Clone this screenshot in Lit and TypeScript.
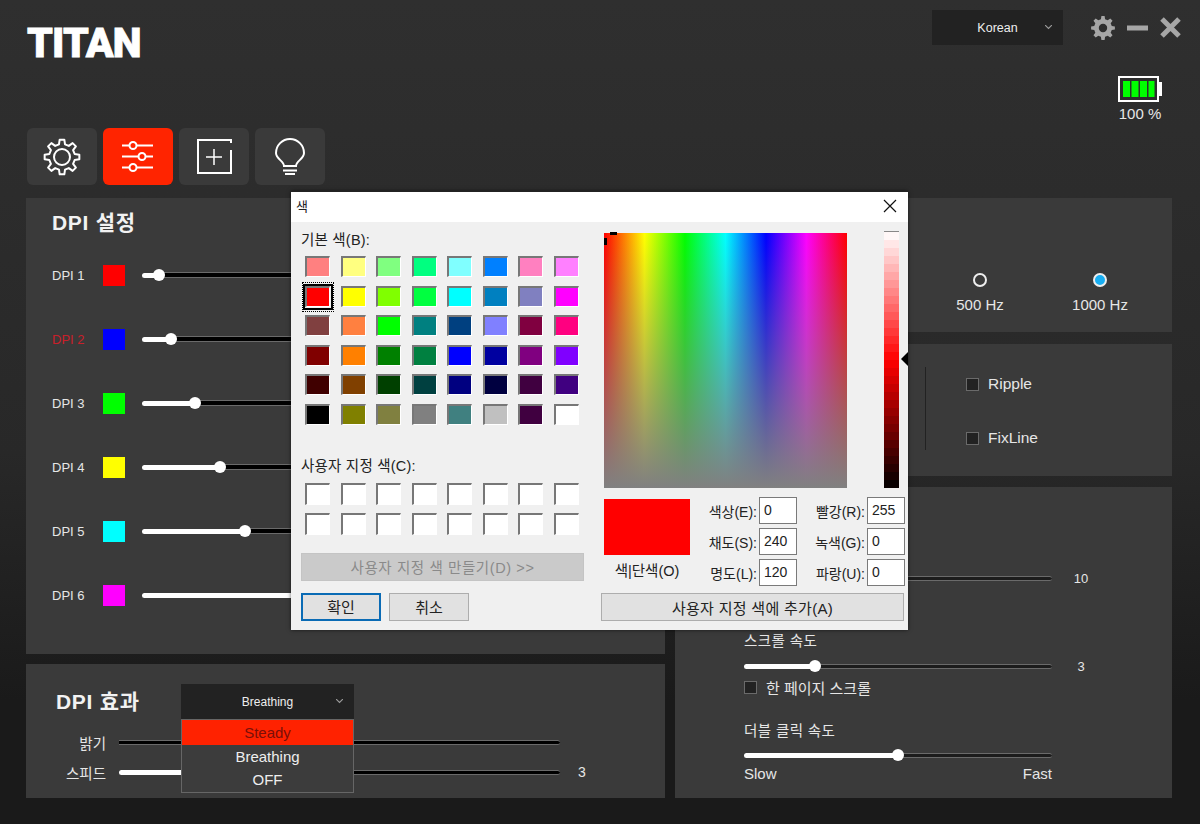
import { LitElement, css, html, svg } from 'lit';
import { customElement, property } from 'lit/decorators.js';
import { styleMap } from 'lit/directives/style-map.js';
import { classMap } from 'lit/directives/class-map.js';

const SANS = css`'Liberation Sans', 'Noto Sans CJK KR', sans-serif`;

const BASIC_COLORS = [
  '#ff8080', '#ffff80', '#80ff80', '#00ff80', '#80ffff', '#0080ff', '#ff80c0', '#ff80ff',
  '#ff0000', '#ffff00', '#80ff00', '#00ff40', '#00ffff', '#0080c0', '#8080c0', '#ff00ff',
  '#804040', '#ff8040', '#00ff00', '#008080', '#004080', '#8080ff', '#800040', '#ff0080',
  '#800000', '#ff8000', '#008000', '#008040', '#0000ff', '#0000a0', '#800080', '#8000ff',
  '#400000', '#804000', '#004000', '#004040', '#000080', '#000040', '#400040', '#400080',
  '#000000', '#808000', '#808040', '#808080', '#408080', '#c0c0c0', '#400040', '#ffffff',
];

const DPI_ROWS = [
  { label: 'DPI 1', color: '#ff0000', value: 3.4 },
  { label: 'DPI 2', color: '#0000ff', value: 5.8, active: true },
  { label: 'DPI 3', color: '#00ff00', value: 10.7 },
  { label: 'DPI 4', color: '#ffff00', value: 15.7 },
  { label: 'DPI 5', color: '#00ffff', value: 20.7 },
  { label: 'DPI 6', color: '#ff00ff', value: 45 },
];

// outline of a cog with square-ish teeth, centred on 0,0
function gearPath(outer: number, inner: number, teeth: number): string {
  const pts: string[] = [];
  const step = (Math.PI * 2) / teeth;
  for (let i = 0; i < teeth; i++) {
    const a = i * step;
    const corners: [number, number][] = [
      [inner, a - step * 0.3],
      [outer, a - step * 0.17],
      [outer, a + step * 0.17],
      [inner, a + step * 0.3],
    ];
    for (const [r, t] of corners) {
      pts.push(`${(r * Math.cos(t)).toFixed(2)} ${(r * Math.sin(t)).toFixed(2)}`);
    }
  }
  return `M${pts.join('L')}Z`;
}

const chevron = svg`<polyline points="0,0 3.5,3.5 7,0" fill="none" stroke="#9a9a9a" stroke-width="1.2"/>`;

@customElement('titan-slider')
export class TitanSlider extends LitElement {
  static styles = css`
    :host {
      display: flex;
      align-items: center;
      height: 12px;
    }
    .fill {
      height: 5px;
      background: #fff;
      border-radius: 3px 0 0 3px;
    }
    .thumb {
      flex: none;
      width: 12px;
      height: 12px;
      margin: 0 -6px;
      border-radius: 50%;
      background: #fff;
      position: relative;
    }
    .rest {
      flex: 1;
      height: var(--rest-h, 3px);
      background: var(--rest-bg, #000);
      border-top: 1px solid #6a6a6a;
      border-bottom: 1px solid #6a6a6a;
      border-radius: 0 3px 3px 0;
    }
  `;

  @property({ type: Number }) value = 0;
  @property({ type: Boolean }) bare = false;

  render() {
    return html`
      <div class="fill" style=${styleMap({ width: `${this.value}%` })}></div>
      ${this.bare ? null : html`<div class="thumb"></div>`}
      <div class="rest"></div>
    `;
  }
}

@customElement('color-dialog')
export class ColorDialog extends LitElement {
  static styles = css`
    :host {
      display: block;
      width: 617px;
      box-sizing: border-box;
      border-top: 1px solid #222;
      background: #f0f0f0;
      color: #222;
      font: 14px ${SANS};
      box-shadow: 0 0 4px rgba(0, 0, 0, 0.6);
    }
    .title {
      height: 30px;
      background: #fff;
      display: flex;
      align-items: center;
      justify-content: space-between;
      padding: 0 11px 3px 5px;
      box-sizing: border-box;
      font-size: 13px;
    }
    .body {
      display: flex;
      gap: 17px;
      padding: 0 4px 9px 10px;
    }
    .left {
      width: 283px;
      padding-top: 10px;
    }
    .cap {
      height: 16px;
      line-height: 16px;
      font-size: 14.5px;
      letter-spacing: 0.2px;
      white-space: nowrap;
    }
    .grid {
      display: grid;
      grid-template-columns: repeat(8, 25px);
      column-gap: 10.5px;
      padding-left: 4px;
    }
    .basic {
      margin-top: 8px;
      row-gap: 8.6px;
      grid-auto-rows: 21px;
    }
    .custom {
      margin-top: 9px;
      row-gap: 8px;
      grid-auto-rows: 22px;
    }
    .swatch {
      position: relative;
      box-sizing: border-box;
      border-top: 2px solid #777;
      border-left: 2px solid #777;
      border-right: 1px solid #fff;
      border-bottom: 1px solid #fff;
    }
    .swatch.blank {
      background: #fff;
    }
    .swatch.picked::before {
      content: '';
      position: absolute;
      inset: -4px;
      border: 2px solid #000;
    }
    .swatch.picked::after {
      content: '';
      position: absolute;
      inset: -6px -5px;
      border: 1px dotted #000;
    }
    .btn {
      box-sizing: border-box;
      height: 28px;
      display: flex;
      align-items: center;
      justify-content: center;
      background: #e1e1e1;
      border: 1px solid #adadad;
      font-size: 15px;
    }
    .make {
      margin-top: 18px;
      background: #cacaca;
      border-color: #c4c4c4;
      color: #8a8a8a;
      font-size: 14.5px;
      letter-spacing: 0.6px;
    }
    .actions {
      display: flex;
      gap: 8px;
      margin-top: 12px;
    }
    .actions .btn {
      width: 80px;
    }
    .ok {
      border: 2px solid #0a6bb5;
    }
    .right {
      width: 303px;
      flex: none;
    }
    .pick {
      display: flex;
      align-items: flex-start;
      padding-left: 3px;
    }
    .spectrum {
      position: relative;
      width: 243px;
      height: 255px;
      margin-top: 11px;
      background:
        linear-gradient(to bottom, rgba(128, 128, 128, 0), #808080),
        linear-gradient(to right, #f00, #ff0, #0f0, #0ff, #00f, #f0f, #f00);
    }
    .mark {
      position: absolute;
      background: #000;
    }
    .mark.h {
      left: 6px;
      top: -1px;
      width: 7px;
      height: 3px;
    }
    .mark.v {
      left: 0;
      top: 5px;
      width: 3px;
      height: 7px;
    }
    .lum {
      position: relative;
      width: 15px;
      height: 257px;
      margin: 9px 0 0 37px;
      display: flex;
      flex-direction: column;
      border-top: 1px solid #888;
      box-sizing: border-box;
    }
    .band {
      flex: 1;
    }
    .arrow {
      position: absolute;
      left: 17px;
      top: 120px;
      width: 0;
      height: 0;
      border: 7px solid transparent;
      border-left: 0;
      border-right-color: #000;
    }
    .lower {
      display: flex;
      margin-top: 9px;
    }
    .preview {
      flex: none;
      width: 86px;
      margin: 2px 0 0 3px;
      text-align: center;
      font-size: 14.5px;
      white-space: nowrap;
    }
    .solid {
      height: 56px;
      background: #f00;
      margin-bottom: 4px;
    }
    .fields {
      flex: none;
      display: grid;
      grid-template-columns: 67px 38px 66px 38px;
      column-gap: 2px;
      grid-auto-rows: 27px;
      row-gap: 4px;
    }
    .fields span {
      align-self: center;
      text-align: right;
      white-space: nowrap;
    }
    .field {
      box-sizing: border-box;
      background: #fff;
      border: 1px solid #7a7a7a;
      padding-left: 4px;
      line-height: 25px;
    }
    .add {
      margin-top: 7px;
      letter-spacing: 0.3px;
    }
  `;

  render() {
    const bands = Array.from({ length: 32 }, (_, i) => {
      const t = (i + 0.5) / 32;
      // white to red in the upper half, red to black below
      const c =
        t < 0.5
          ? `rgb(255, ${Math.round(255 * (1 - t * 2))}, ${Math.round(255 * (1 - t * 2))})`
          : `rgb(${Math.round(255 * (2 - t * 2))}, 0, 0)`;
      return html`<div class="band" style=${styleMap({ background: c })}></div>`;
    });
    return html`
      <div class="title">
        <span>색</span>
        <svg width="14" height="14" viewBox="0 0 14 14">
          <path d="M1 1L13 13M13 1L1 13" stroke="#111" stroke-width="1.2" />
        </svg>
      </div>
      <div class="body">
        <div class="left">
          <div class="cap">기본 색(B):</div>
          <div class="grid basic">
            ${BASIC_COLORS.map(
              (c, i) => html`<div
                class=${classMap({ swatch: true, picked: i === 8 })}
                style=${styleMap({ background: c })}
              ></div>`,
            )}
          </div>
          <div class="cap" style="margin-top:33px">사용자 지정 색(C):</div>
          <div class="grid custom">
            ${Array.from({ length: 16 }, () => html`<div class="swatch blank"></div>`)}
          </div>
          <div class="btn make">사용자 지정 색 만들기(D) &gt;&gt;</div>
          <div class="actions">
            <div class="btn ok">확인</div>
            <div class="btn">취소</div>
          </div>
        </div>
        <div class="right">
          <div class="pick">
            <div class="spectrum">
              <div class="mark h"></div>
              <div class="mark v"></div>
            </div>
            <div class="lum">
              ${bands}
              <div class="arrow"></div>
            </div>
          </div>
          <div class="lower">
            <div class="preview">
              <div class="solid"></div>
              색|단색(O)
            </div>
            <div class="fields">
              <span>색상(E):</span>
              <div class="field">0</div>
              <span>빨강(R):</span>
              <div class="field">255</div>
              <span>채도(S):</span>
              <div class="field">240</div>
              <span>녹색(G):</span>
              <div class="field">0</div>
              <span>명도(L):</span>
              <div class="field">120</div>
              <span>파랑(U):</span>
              <div class="field">0</div>
            </div>
          </div>
          <div class="btn add">사용자 지정 색에 추가(A)</div>
        </div>
      </div>
    `;
  }
}

@customElement('app-root')
export class AppRoot extends LitElement {
  static styles = css`
    :host {
      display: block;
      position: relative;
      width: 1200px;
      height: 824px;
      overflow: hidden;
      background: linear-gradient(#2f2f2f, #282828 55%, #1a1a1a 85%);
      color: #e6e6e6;
      font: 14px ${SANS};
    }
    header {
      height: 128px;
      display: flex;
      justify-content: space-between;
      padding: 0 19px 0 27px;
    }
    .logo {
      margin-top: 23px;
      height: 40px;
      font: 900 41px/40px Roboto, ${SANS};
      letter-spacing: -0.8px;
      -webkit-text-stroke: 0.8px #fff;
      color: #fff;
    }
    .top {
      display: flex;
      flex-direction: column;
      align-items: flex-end;
    }
    .controls {
      display: flex;
      align-items: center;
      margin-top: 10px;
    }
    .select {
      position: relative;
      box-sizing: border-box;
      display: flex;
      align-items: center;
      justify-content: center;
      background: #222;
      font-size: 12.5px;
      color: #eee;
    }
    .select svg {
      position: absolute;
      right: 11px;
      top: 15px;
    }
    .lang {
      width: 131px;
      height: 35px;
      margin-right: 28px;
    }
    .win {
      display: flex;
      align-items: center;
      gap: 12px;
    }
    .battery {
      margin: 31px 10px 0 0;
      width: 62px;
      text-align: center;
      font-size: 15px;
      line-height: 18px;
    }
    .battery svg {
      display: block;
      margin: 0 auto 3px;
    }
    .tabs {
      display: flex;
      gap: 6px;
      padding-left: 27px;
      height: 57px;
      margin-bottom: 13px;
    }
    .tab {
      width: 70px;
      display: flex;
      align-items: center;
      justify-content: center;
      background: #3a3a3a;
      border-radius: 6px;
    }
    .tab.on {
      background: #ff2400;
    }
    .columns {
      display: grid;
      grid-template-columns: 639px 497px;
      gap: 10px;
      padding-left: 26px;
    }
    .col {
      display: flex;
      flex-direction: column;
    }
    .panel {
      position: relative;
      background: #3a3a3a;
      box-sizing: border-box;
    }
    h2 {
      margin: 0;
      font: bold 21px/26px ${SANS};
      letter-spacing: 0.7px;
      color: #f2f2f2;
    }
    .dpi {
      height: 456px;
      margin-bottom: 10px;
      padding: 12px 0 0 26px;
    }
    .dpi-rows {
      margin-top: 3px;
      padding-top: 4px;
    }
    .dpi-row {
      display: flex;
      align-items: center;
      height: 64px;
      font-size: 13px;
    }
    .dpi-row .name {
      width: 51px;
    }
    .dpi-row.active .name {
      color: #c8202a;
    }
    .dpi-row .chip {
      width: 22px;
      height: 21px;
      margin-right: 17px;
    }
    .dpi-row titan-slider {
      width: 498px;
      --rest-h: 4px;
    }
    .effect {
      height: 134px;
      padding-top: 20px;
    }
    .effect-head {
      display: flex;
      align-items: center;
      padding-left: 30px;
    }
    .effect-head h2 {
      width: 125px;
    }
    .drop {
      width: 173px;
      height: 35px;
      font-size: 12px;
    }
    .menu {
      position: absolute;
      left: 0;
      top: 35px;
      width: 173px;
      height: 74px;
      box-sizing: border-box;
      background: #3c3c3c;
      border: 1px solid #666;
      font-size: 15px;
      text-align: center;
      line-height: 23px;
      z-index: 1;
    }
    .menu .sel {
      background: #ff2200;
      color: #7a0f08;
      height: 25px;
      line-height: 25px;
    }
    .effect-rows {
      display: grid;
      grid-template-columns: 80px 441px auto;
      column-gap: 13px;
      row-gap: 14px;
      grid-auto-rows: 16px;
      margin-top: 15px;
      align-items: center;
      font-size: 14.5px;
    }
    .effect-rows .lbl {
      text-align: right;
    }
    .effect-rows .val {
      margin-left: 5px;
      font-size: 14px;
    }
    .rate {
      height: 134px;
      margin-bottom: 12px;
      padding: 75px 0 0 245px;
      display: grid;
      grid-template-columns: 120px 120px;
      justify-items: center;
      align-content: start;
    }
    .radio {
      display: flex;
      flex-direction: column;
      align-items: center;
      gap: 9px;
      font-size: 15px;
      line-height: 18px;
    }
    .dot {
      box-sizing: border-box;
      width: 14px;
      height: 14px;
      border: 2px solid #eee;
      border-radius: 50%;
    }
    .dot.on {
      background: #18aef2;
    }
    .line {
      height: 132px;
      margin-bottom: 11px;
      display: flex;
      padding-left: 250px;
    }
    .sep {
      width: 1px;
      height: 83px;
      margin: 23px 40px 0 0;
      background: #222;
    }
    .checks {
      display: flex;
      flex-direction: column;
      gap: 34px;
      padding-top: 30px;
    }
    .check {
      display: flex;
      align-items: center;
      gap: 9px;
      height: 20px;
      font-size: 15.5px;
    }
    .box {
      box-sizing: border-box;
      width: 13px;
      height: 13px;
      background: #222;
      border: 1px solid #6a6a6a;
    }
    .mouse {
      height: 311px;
      padding: 85px 0 0 69px;
      --rest-bg: #1c1c1c;
    }
    .mouse titan-slider {
      width: 308px;
    }
    .slide-row {
      display: flex;
      align-items: center;
      height: 12px;
      font-size: 13px;
    }
    .slide-row span {
      width: 58px;
      text-align: center;
    }
    .cap {
      height: 20px;
      line-height: 20px;
      letter-spacing: 0.4px;
      font-size: 14.5px;
    }
    .page {
      margin-top: 5px;
      font-size: 15px;
    }
    .ends {
      width: 308px;
      display: flex;
      justify-content: space-between;
      height: 18px;
      line-height: 18px;
      margin-top: 4px;
      font-size: 15px;
    }
    color-dialog {
      position: absolute;
      left: 291px;
      top: 191px;
    }
  `;

  private renderTabs() {
    return html`
      <div class="tabs">
        <div class="tab">
          <svg width="40" height="40" viewBox="-20 -20 40 40" fill="none" stroke="#fff" stroke-width="2">
            <path d=${gearPath(17.5, 13, 8)} stroke-linejoin="round" />
            <circle r="8" />
          </svg>
        </div>
        <div class="tab on">
          <svg width="36" height="36" viewBox="0 0 36 36" fill="none" stroke="#fff" stroke-width="2">
            <path d="M2 6.5H33M2 17.5H33M2 28.5H33" />
            <circle cx="13" cy="6.5" r="3.5" fill="#ff2400" />
            <circle cx="22" cy="17.5" r="3.5" fill="#ff2400" />
            <circle cx="13" cy="28.5" r="3.5" fill="#ff2400" />
          </svg>
        </div>
        <div class="tab">
          <svg width="38" height="38" viewBox="0 0 38 38" fill="none" stroke="#fff" stroke-width="2">
            <path d="M36 5V2H3V35H36V12" />
            <path d="M11 19H27M19 11V27" stroke-width="1.5" />
          </svg>
        </div>
        <div class="tab">
          <svg width="32" height="40" viewBox="0 -2 32 40" fill="none" stroke="#fff" stroke-width="2">
            <path d="M10 27C10 22 2 20 2 14A14 14 0 1 1 30 14C30 20 22 22 22 27Z" />
            <path d="M9 31.5H23M11 35H21" />
          </svg>
        </div>
      </div>
    `;
  }

  private renderHeader() {
    return html`
      <header>
        <div class="logo">TITAN</div>
        <div class="top">
          <div class="controls">
            <div class="select lang">
              Korean
              <svg width="7" height="5" viewBox="0 0 7 5">${chevron}</svg>
            </div>
            <div class="win">
              <svg width="24" height="24" viewBox="-12 -12 24 24">
                <path
                  fill="#a6a6a6"
                  fill-rule="evenodd"
                  d="${gearPath(12, 9, 8)}M4.2 0A4.2 4.2 0 1 0 -4.2 0A4.2 4.2 0 1 0 4.2 0Z"
                />
              </svg>
              <svg width="21" height="6" viewBox="0 0 21 6"><rect width="21" height="5" y="0.5" fill="#a6a6a6" /></svg>
              <svg width="21" height="21" viewBox="0 0 21 21">
                <path d="M2 2L19 19M19 2L2 19" stroke="#a6a6a6" stroke-width="5" />
              </svg>
            </div>
          </div>
          <div class="battery">
            <svg width="44" height="26" viewBox="0 0 44 26">
              <rect x="1" y="1" width="39" height="24" fill="none" stroke="#fff" stroke-width="2" />
              <rect x="41" y="6" width="3" height="14" fill="#fff" />
              <rect x="5" y="5" width="7" height="16" fill="#0f0" />
              <rect x="13.5" y="5" width="7" height="16" fill="#0f0" />
              <rect x="22" y="5" width="7" height="16" fill="#0f0" />
              <rect x="30.5" y="5" width="6" height="16" fill="#0f0" />
            </svg>
            100 %
          </div>
        </div>
      </header>
    `;
  }

  render() {
    return html`
      ${this.renderHeader()} ${this.renderTabs()}
      <div class="columns">
        <div class="col">
          <section class="panel dpi">
            <h2>DPI 설정</h2>
            <div class="dpi-rows">
              ${DPI_ROWS.map(
                (r) => html`
                  <div class=${classMap({ 'dpi-row': true, active: !!r.active })}>
                    <span class="name">${r.label}</span>
                    <div class="chip" style=${styleMap({ background: r.color })}></div>
                    <titan-slider .value=${r.value}></titan-slider>
                  </div>
                `,
              )}
            </div>
          </section>
          <section class="panel effect">
            <div class="effect-head">
              <h2>DPI 효과</h2>
              <div class="select drop">
                Breathing
                <svg width="7" height="5" viewBox="0 0 7 5">${chevron}</svg>
                <div class="menu">
                  <div class="sel">Steady</div>
                  <div>Breathing</div>
                  <div>OFF</div>
                </div>
              </div>
            </div>
            <div class="effect-rows">
              <span class="lbl">밝기</span>
              <titan-slider bare></titan-slider>
              <span></span>
              <span class="lbl">스피드</span>
              <titan-slider .value=${20}></titan-slider>
              <span class="val">3</span>
            </div>
          </section>
        </div>
        <div class="col">
          <section class="panel rate">
            <div class="radio"><div class="dot"></div>500 Hz</div>
            <div class="radio"><div class="dot on"></div>1000 Hz</div>
          </section>
          <section class="panel line">
            <div class="sep"></div>
            <div class="checks">
              <div class="check"><div class="box"></div>Ripple</div>
              <div class="check"><div class="box"></div>FixLine</div>
            </div>
          </section>
          <section class="panel mouse">
            <div class="slide-row">
              <titan-slider .value=${45}></titan-slider>
              <span>10</span>
            </div>
            <div class="cap" style="margin-top:47px">스크롤 속도</div>
            <div class="slide-row" style="margin-top:9px">
              <titan-slider .value=${23}></titan-slider>
              <span>3</span>
            </div>
            <div class="check page"><div class="box"></div>한 페이지 스크롤</div>
            <div class="cap" style="margin-top:24px">더블 클릭 속도</div>
            <titan-slider .value=${50} style="margin-top:8px"></titan-slider>
            <div class="ends"><span>Slow</span><span>Fast</span></div>
          </section>
        </div>
      </div>
      <color-dialog></color-dialog>
    `;
  }
}

declare global {
  interface HTMLElementTagNameMap {
    'app-root': AppRoot;
    'titan-slider': TitanSlider;
    'color-dialog': ColorDialog;
  }
}
